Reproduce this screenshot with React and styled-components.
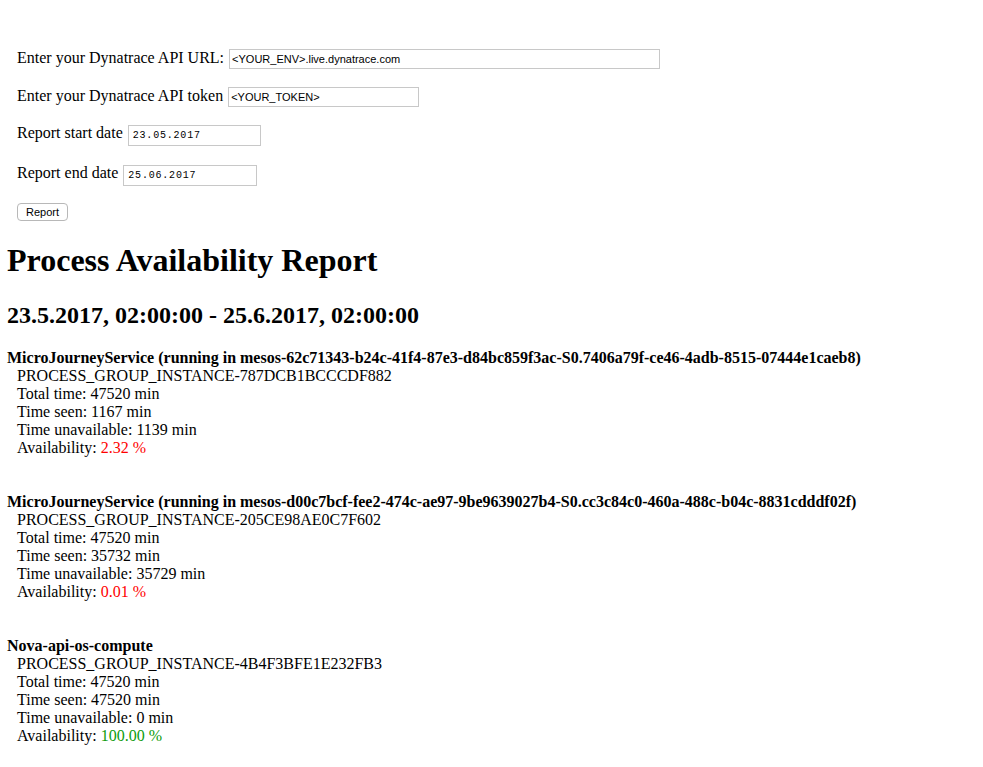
import styled, { createGlobalStyle } from 'styled-components'

const GlobalStyle = createGlobalStyle`
  body {
    margin: 0;
    background: #fff;
    color: #000;
    font-family: "Liberation Serif", "Times New Roman", serif;
    font-size: 16px;
  }
`

const Page = styled.div`
  padding: 0 7px 40px 7px;
`

const Form = styled.div`
  display: flex;
  flex-direction: column;
  align-items: flex-start;
  gap: 17.5px;
  padding: 49px 10px 0 10px;
`

const Row = styled.div`
  display: flex;
  align-items: baseline;
  gap: 5px;
`

const Label = styled.span`
  font-size: 16px;
  line-height: 18px;
`

const TextInput = styled.input`
  box-sizing: border-box;
  width: ${p => p.$w}px;
  height: 20px;
  padding: 1px 2px;
  border: 1px solid #c8c8c8;
  font-family: "Liberation Sans", Arial, sans-serif;
  font-size: 11px;
  color: #000;
  outline: none;
`

const DateInput = styled.input`
  box-sizing: border-box;
  width: ${p => p.$w}px;
  height: 21px;
  padding: 1px 4px;
  border: 1px solid #c8c8c8;
  font-family: "Liberation Mono", "Courier New", monospace;
  font-size: 10px;
  letter-spacing: 0.8px;
  color: #000;
  outline: none;
`

const Button = styled.button`
  box-sizing: border-box;
  width: 51px;
  height: 18px;
  padding: 0;
  background: #fff;
  border: 1px solid #b8b8b8;
  border-radius: 4px;
  font-family: "Liberation Sans", Arial, sans-serif;
  font-size: 11px;
  color: #000;
`

const Title = styled.h1`
  font-size: 32px;
  font-weight: bold;
  line-height: 37px;
  margin: 21px 0 22px 0;
`

const Range = styled.h2`
  font-size: 24px;
  font-weight: bold;
  line-height: 28px;
  margin: 0 0 20px 0;
`

const Entry = styled.div`
  line-height: 18px;
  margin-bottom: 36px;
`

const EntryName = styled.div`
  font-weight: bold;
`

const Line = styled.div`
  padding-left: 10px;
`

const Value = styled.span`
  color: ${p => (p.$good ? '#0c9c0c' : '#ff0000')};
`

const processes = [
  {
    name: 'MicroJourneyService (running in mesos-62c71343-b24c-41f4-87e3-d84bc859f3ac-S0.7406a79f-ce46-4adb-8515-07444e1caeb8)',
    id: 'PROCESS_GROUP_INSTANCE-787DCB1BCCCDF882',
    total: 47520,
    seen: 1167,
    unavailable: 1139,
    availability: '2.32',
  },
  {
    name: 'MicroJourneyService (running in mesos-d00c7bcf-fee2-474c-ae97-9be9639027b4-S0.cc3c84c0-460a-488c-b04c-8831cdddf02f)',
    id: 'PROCESS_GROUP_INSTANCE-205CE98AE0C7F602',
    total: 47520,
    seen: 35732,
    unavailable: 35729,
    availability: '0.01',
  },
  {
    name: 'Nova-api-os-compute',
    id: 'PROCESS_GROUP_INSTANCE-4B4F3BFE1E232FB3',
    total: 47520,
    seen: 47520,
    unavailable: 0,
    availability: '100.00',
  },
]

export default function App() {
  return (
    <>
      <GlobalStyle />
      <Page>
        <Form>
          <Row>
            <Label>Enter your Dynatrace API URL:</Label>
            <TextInput $w={431} defaultValue="<YOUR_ENV>.live.dynatrace.com" />
          </Row>
          <Row>
            <Label>Enter your Dynatrace API token</Label>
            <TextInput $w={191} defaultValue="<YOUR_TOKEN>" />
          </Row>
          <Row>
            <Label>Report start date</Label>
            <DateInput $w={133} defaultValue="23.05.2017" />
          </Row>
          <Row>
            <Label>Report end date</Label>
            <DateInput $w={134} defaultValue="25.06.2017" />
          </Row>
          <Button>Report</Button>
        </Form>
        <Title>Process Availability Report</Title>
        <Range>23.5.2017, 02:00:00 - 25.6.2017, 02:00:00</Range>
        {processes.map(p => (
          <Entry key={p.id}>
            <EntryName>{p.name}</EntryName>
            <Line>{p.id}</Line>
            <Line>Total time: {p.total} min</Line>
            <Line>Time seen: {p.seen} min</Line>
            <Line>Time unavailable: {p.unavailable} min</Line>
            <Line>
              Availability: <Value $good={parseFloat(p.availability) >= 50}>{p.availability} %</Value>
            </Line>
          </Entry>
        ))}
      </Page>
    </>
  )
}
